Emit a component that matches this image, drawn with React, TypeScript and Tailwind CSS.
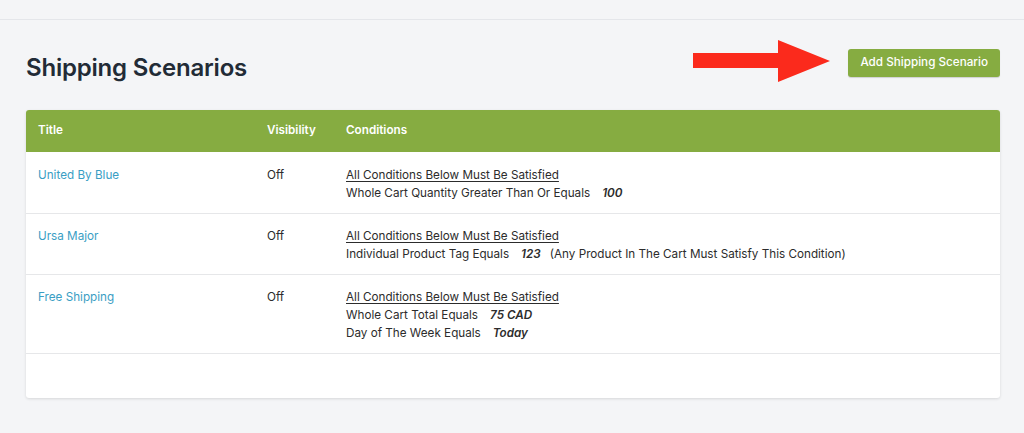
import React from "react";

interface Scenario {
  title: string;
  visibility: string;
  conditions: { label: string; value: string; note?: string }[];
}

const scenarios: Scenario[] = [
  {
    title: "United By Blue",
    visibility: "Off",
    conditions: [{ label: "Whole Cart Quantity Greater Than Or Equals", value: "100" }],
  },
  {
    title: "Ursa Major",
    visibility: "Off",
    conditions: [
      {
        label: "Individual Product Tag Equals",
        value: "123",
        note: "(Any Product In The Cart Must Satisfy This Condition)",
      },
    ],
  },
  {
    title: "Free Shipping",
    visibility: "Off",
    conditions: [
      { label: "Whole Cart Total Equals", value: "75 CAD" },
      { label: "Day of The Week Equals", value: "Today" },
    ],
  },
];

function Arrow() {
  return (
    <svg width="138" height="42" viewBox="0 0 138 42" className="shrink-0">
      <polygon points="0,13 85,13 85,0 137,21 85,42 85,28 0,28" fill="#fb2a1c" />
    </svg>
  );
}

export default function App() {
  return (
    <div
      className="min-h-[433px] bg-[#f4f5f7] text-[#212b36]"
      style={{ fontFamily: "Inter, 'Noto Sans', sans-serif" }}
    >
      <div className="h-5 border-b border-[#e4e6ea]" />
      <div className="px-[26px] pr-[24px]">
        <div className="flex h-[90px]">
          <h1 className="self-center mt-[6px] text-[24px] font-semibold tracking-[-0.2px] text-[#222b36]">
            Shipping Scenarios
          </h1>
          <div className="ml-auto flex items-start gap-[17px]">
            <div className="mt-[20px]">
              <Arrow />
            </div>
            <button className="mt-[29px] h-[28px] px-[12px] rounded-[3px] bg-[#86ac41] text-white text-[11.7px] font-medium shadow-[0_1px_1px_rgba(0,0,0,0.15)]">
              Add Shipping Scenario
            </button>
          </div>
        </div>

        <div className="bg-white rounded-[3px] shadow-[0_1px_3px_rgba(0,0,0,0.12)] overflow-hidden text-[11.7px]">
          <div className="grid grid-cols-[229px_79px_1fr] px-3 h-[42px] items-center bg-[#86ac41] text-white font-semibold">
            <div>Title</div>
            <div>Visibility</div>
            <div>Conditions</div>
          </div>
          {scenarios.map((s, i) => (
            <div
              key={i}
              className={`grid grid-cols-[229px_79px_1fr] px-3 pb-[11px] leading-[18px] text-[#2c2c2c] ${
                i > 0 ? "border-t border-[#e6e7e9] pt-[13px]" : "pt-[14px]"
              }`}
            >
              <div className="text-[#3a9ec4]">{s.title}</div>
              <div>{s.visibility}</div>
              <div>
                <div className="underline underline-offset-2">All Conditions Below Must Be Satisfied</div>
                {s.conditions.map((c, j) => (
                  <div key={j}>
                    {c.label}
                    <span className="ml-3 font-semibold italic">{c.value}</span>
                    {c.note && <span className="ml-[9px]">{c.note}</span>}
                  </div>
                ))}
              </div>
            </div>
          ))}
          <div className="h-[45px] border-t border-[#e6e7e9]" />
        </div>
      </div>
    </div>
  );
}
